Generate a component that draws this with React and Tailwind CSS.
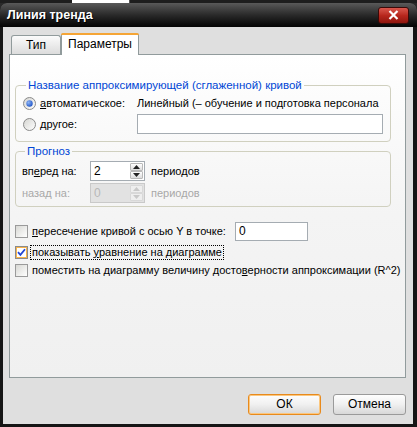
import React from "react";

function Radio({ checked }) {
  return (
    <svg width="13" height="13" viewBox="0 0 13 13" className="shrink-0">
      <defs>
        <linearGradient id="rgrad" x1="0" y1="0" x2="1" y2="1">
          <stop offset="0" stopColor="#d4d4d0" />
          <stop offset="1" stopColor="#ffffff" />
        </linearGradient>
        <radialGradient id="rdot" cx="0.35" cy="0.35" r="0.7">
          <stop offset="0" stopColor="#8fb5f5" />
          <stop offset="1" stopColor="#1f55c8" />
        </radialGradient>
      </defs>
      <circle cx="6.5" cy="6.5" r="6" fill="url(#rgrad)" stroke="#8a8a8a" />
      {checked && <circle cx="6.5" cy="6.5" r="3.2" fill="url(#rdot)" />}
    </svg>
  );
}

function Check({ checked }) {
  if (checked) {
    return (
      <div className="w-[13px] h-[13px] shrink-0 border border-[#8a8a8a] bg-[#f8b34a] p-[1px]">
        <div className="w-full h-full bg-white flex items-center justify-center">
          <svg width="9" height="9" viewBox="0 0 9 9">
            <path d="M1 4.2 L3.4 6.8 L8 1.2" fill="none" stroke="#2145d4" strokeWidth="1.8" />
          </svg>
        </div>
      </div>
    );
  }
  return (
    <div className="w-[13px] h-[13px] shrink-0 border border-[#9a9a9a] bg-gradient-to-br from-[#d8d8d4] to-white" />
  );
}

function Spinner({ value, disabled }) {
  return (
    <div
      className={
        "w-[55px] h-[20px] flex border " +
        (disabled ? "border-[#c9c9c9] bg-[#e2e2e2]" : "border-[#a5acb2] bg-white")
      }
    >
      <div className={"flex-1 pl-[3px] flex items-center text-[12px] " + (disabled ? "text-[#b8b8b8]" : "text-black")}>
        {value}
      </div>
      <div className="w-[15px] flex flex-col p-[1px] gap-0">
        <div
          className={
            "flex-1 flex items-center justify-center border rounded-[1px] " +
            (disabled ? "border-[#d8d8d8] bg-[#eeeeee]" : "border-[#b9b9b9] bg-gradient-to-b from-white to-[#dcdcdc]")
          }
        >
          <svg width="7" height="4" viewBox="0 0 7 4">
            <path d="M0 4 L3.5 0 L7 4 Z" fill={disabled ? "#c8c8c8" : "#222"} />
          </svg>
        </div>
        <div
          className={
            "flex-1 flex items-center justify-center border rounded-[1px] " +
            (disabled ? "border-[#d8d8d8] bg-[#eeeeee]" : "border-[#b9b9b9] bg-gradient-to-b from-white to-[#dcdcdc]")
          }
        >
          <svg width="7" height="4" viewBox="0 0 7 4">
            <path d="M0 0 L3.5 4 L7 0 Z" fill={disabled ? "#c8c8c8" : "#222"} />
          </svg>
        </div>
      </div>
    </div>
  );
}

export default function App() {
  return (
    <div className="w-[417px] h-[427px] bg-[#2a2a2a] flex flex-col overflow-hidden font-['Liberation_Sans',Arial,sans-serif] text-[11px] leading-[13px] text-black">
      {/* background strip above window */}
      <div className="h-[3px] flex shrink-0">
        <div className="w-[72px] bg-[#1e1e1e]" />
        <div className="w-[57px] bg-white" />
        <div className="w-[1px] bg-[#555]" />
        <div className="flex-1 bg-[#1e1e1e]" />
      </div>
      {/* window */}
      <div className="flex-1 flex flex-col bg-black rounded-t-[7px] overflow-hidden">
        {/* title bar */}
        <div className="h-[24px] shrink-0 flex items-center justify-between pl-[7px] pr-[8px] bg-gradient-to-b from-[#5a5a5a] via-[#2a2a2a] to-[#050505]">
          <div className="text-white font-bold text-[12.5px] [text-shadow:1px_1px_0_#000]">Линия тренда</div>
          <div className="w-[31px] h-[17px] rounded-[3px] border border-[#3a0a08] bg-gradient-to-b from-[#d9564c] via-[#b8271d] to-[#8f150d] flex items-center justify-center">
            <svg width="11" height="10" viewBox="0 0 11 10">
              <path d="M1.5 1 L9.5 9 M9.5 1 L1.5 9" stroke="white" strokeWidth="2.2" />
            </svg>
          </div>
        </div>
        {/* body */}
        <div className="flex-1 flex flex-col bg-[#dfdfdf] border-l-[3px] border-r-[4px] border-b-[3px] border-[#151515] pl-[6px] pr-[7px]">
          {/* tabs */}
          <div className="h-[21px] mt-[6px] ml-[2px] flex items-end shrink-0 relative z-10 text-[12px]">
            <div className="w-[50px] h-[19px] border border-b-0 border-[#919b9c] rounded-t-[3px] bg-gradient-to-b from-[#fbfbfb] to-[#dcdcdc] flex items-center justify-center">
              Тип
            </div>
            <div className="w-[78px] h-[22px] -mb-[1px] border-x border-[#919b9c] rounded-t-[3px] bg-white flex flex-col">
              <div className="h-[2px] bg-[#f5a536] rounded-t-[2px] -mx-[1px]" />
              <div className="flex-1 flex items-center justify-center pb-[1px]">Параметры</div>
            </div>
          </div>
          {/* panel */}
          <div className="h-[324px] shrink-0 border border-[#919b9c] bg-gradient-to-b from-white via-[#f4f4f4] to-[#f0f0f0] pl-[5px] pr-[14px] pt-[24px] flex flex-col">
            <fieldset className="border border-[#d0d0bf] rounded-[4px] pl-[7px] pr-[7px] pb-[7px]">
              <legend className="ml-[3px] px-[2px] text-[#0046d5] text-[11.5px]">Название аппроксимирующей (сглаженной) кривой</legend>
              <div className="h-[20px] mt-[1px] flex items-center">
                <div className="w-[114px] flex items-center gap-[4px]">
                  <Radio checked />
                  <span>
                    <span className="underline">а</span>втоматическое:
                  </span>
                </div>
                <span className="whitespace-nowrap">Линейный (– обучение и подготовка персонала</span>
              </div>
              <div className="h-[20px] mt-[1px] flex items-center">
                <div className="w-[114px] flex items-center gap-[4px]">
                  <Radio />
                  <span>
                    <span className="underline">д</span>ругое:
                  </span>
                </div>
                <div className="flex-1 h-[20px] border border-[#a5acb2] bg-white" />
              </div>
            </fieldset>
            <fieldset className="mt-[3px] border border-[#d0d0bf] rounded-[4px] pl-[6px] pb-[3px]">
              <legend className="ml-[3px] px-[2px] text-[#0046d5] text-[11.5px]">Прогноз</legend>
              <div className="h-[20px] mt-[3px] flex items-center">
                <span className="w-[68px]">
                  вп<span className="underline">е</span>ред на:
                </span>
                <Spinner value="2" />
                <span className="ml-[6px]">периодов</span>
              </div>
              <div className="h-[20px] mt-[2px] flex items-center text-[#a8a8a8]">
                <span className="w-[68px]">назад на:</span>
                <Spinner value="0" disabled />
                <span className="ml-[6px]">периодов</span>
              </div>
            </fieldset>
            <div className="mt-[14px] h-[20px] flex items-center">
              <Check />
              <span className="ml-[4px]">
                <span className="underline">п</span>ересечение кривой с осью Y в точке:
              </span>
              <div className="ml-[9px] w-[73px] h-[19px] border border-[#a5acb2] bg-white pl-[3px] flex items-center text-[12px]">0</div>
            </div>
            <div className="h-[18px] mt-[2px] flex items-center">
              <Check checked />
              <span className="ml-[2px] px-[1px] border border-dotted border-black leading-[13px]">
                показывать <span className="underline">у</span>равнение на диаграмме
              </span>
            </div>
            <div className="h-[18px] flex items-center">
              <Check />
              <span className="ml-[4px] whitespace-nowrap">
                поместить на диаграмму величину досто<span className="underline">в</span>ерности аппроксимации (R^2)
              </span>
            </div>
          </div>
          {/* buttons */}
          <div className="mt-[16px] flex justify-end gap-[12px]">
            <button className="w-[73px] h-[21px] rounded-[3px] border border-[#e88a1d] bg-gradient-to-b from-[#fefefe] via-[#f0f0f0] to-[#d8d8d8] shadow-[inset_0_0_0_1px_#fbc77f] text-[12px]">
              ОК
            </button>
            <button className="w-[73px] h-[21px] rounded-[3px] border border-[#9a9a9a] bg-gradient-to-b from-[#fefefe] via-[#f0f0f0] to-[#d8d8d8] text-[12px]">
              Отмена
            </button>
          </div>
        </div>
      </div>
    </div>
  );
}
